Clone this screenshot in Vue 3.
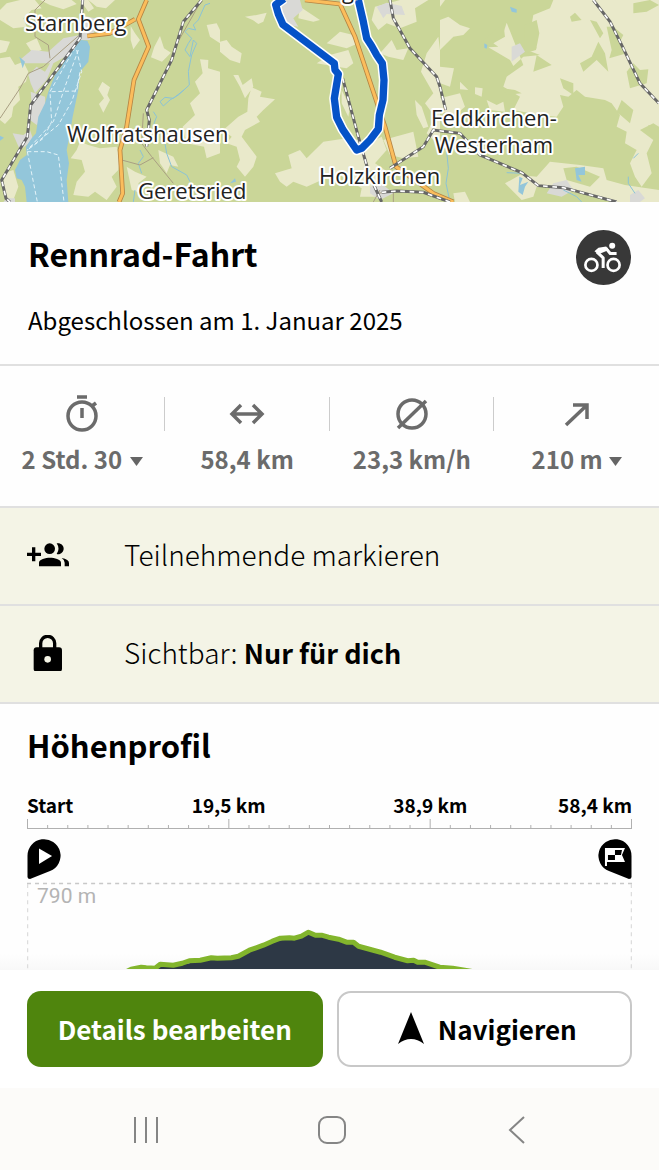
<script setup>
const stats = [
  { id: 'time', label: 'Dauer', value: '2 Std. 30', menu: true, wide: true },
  { id: 'distance', label: 'Distanz', value: '58,4 km' },
  { id: 'speed', label: 'Durchschnitt', value: '23,3 km/h' },
  { id: 'climb', label: 'Bergauf', value: '210 m', menu: true },
]
const axis = ['Start', '19,5 km', '38,9 km', '58,4 km']
const ticks = Array.from({ length: 31 }, (_, i) => ({
  x: 0.5 + i * 20.1,
  y: i % 10 === 0 ? 1 : 7,
}))
</script>

<template>
  <main class="screen">
    <svg class="map" viewBox="0 0 659 202" preserveAspectRatio="xMidYMid slice" role="img" aria-label="Karte der Tour">
      <rect class="forest" x="-700" width="2060" height="202" />
      <g transform="scale(.33333)">
        <g class="field">
          <path d="M0 30 20 10 60 0H105L125 25 95 30 70 55 80 80 40 85 0 60ZM120 0H215L230 12 190 28 150 15ZM240 0H265L282 25 265 35Z" />
          <path d="M0 175 30 170 45 195 70 185 85 215 78 245 55 260 60 300 40 320 35 350 15 372 0 360ZM78 130 110 115 125 150 98 160ZM0 120 30 125 18 155 0 160Z" />
          <path d="M392 78 405 100 420 120 400 148 392 120ZM480 108 492 145 513 158 486 185 453 172 463 140ZM307 245 330 262 322 285 330 300 310 338 297 312 312 295 295 268ZM620 75 650 70 660 90 660 130 630 110ZM600 178 625 180 624 205 660 215 660 460 620 475 612 440 560 430 548 380 585 345 570 310 600 280 585 245 608 220Z" />
          <path d="M240 425 265 435 300 445 350 440 360 480 355 510 335 530 350 560 320 600 285 575 265 590 220 585 230 545 255 515 245 480 212 475 230 450ZM380 500 405 515 440 530 415 550 425 580 395 570ZM10 520 40 510 55 560 40 600 12 590ZM265 0H345L318 25 290 20ZM475 450 520 470 535 500 510 495 500 520 480 490Z" />
        </g>
        <g class="field" transform="translate(660)">
          <path d="M75 50 110 45 140 38 130 65 115 72 98 60ZM0 125 20 120 35 140 65 160 60 190 30 180 0 155ZM40 225 55 225 68 255 95 235 100 260 75 295 60 260ZM95 262 125 275 120 290 165 298 130 330 110 350 120 365 75 390 65 410 110 470 100 500 75 530 50 500 60 480 50 440 20 430 35 410 10 390 55 350 82 335 85 295ZM165 520 215 505 205 465 240 450 260 475 310 425 380 415 455 425 485 410 500 450 465 490 495 510 460 560 480 590 420 590 425 565 350 520 260 560 220 545 200 560 180 545ZM320 130 360 95 400 105 415 130 380 145ZM290 190 330 165 385 150 400 190 380 205 350 200ZM465 20 540 0H625L585 25 590 65 540 85 500 70 475 90 455 60ZM480 160 515 120 530 150 565 145 550 180 505 170ZM603 215 620 160 655 110 660 150V440L620 400 645 350 615 310 640 280ZM585 300 605 320 625 380 610 385 590 345ZM490 420 580 395 595 470 550 475 510 465ZM240 20 300 60 280 65 235 55ZM365 270 390 320 385 350 365 310Z" />
        </g>
        <g class="field" transform="translate(1320)">
          <path d="M0 0H15L0 20ZM0 60 25 50 60 75 90 85 70 105 40 110 0 150ZM0 200 42 205 30 260 0 250ZM0 330V295L60 280 75 320 40 350ZM200 68 190 100 160 130 175 140 145 142 210 180 220 198 250 170 300 165 260 150 290 145 270 100 280 45 330 25 340 0H657V380L640 370 600 390 640 420 620 460 635 520 605 560 585 530 570 490 590 450 555 430 560 395 530 380 540 345 515 310 495 300 435 290 410 270 385 290 360 285 370 320 350 350 300 345 220 330 240 290 190 260 200 230 250 195ZM195 550 240 525 290 530 330 485 420 495 490 505 500 540 555 555 657 570V606H520L440 580 340 560 290 560 280 590 245 600Z" />
          <path d="M140 300 170 315 190 305 195 335 150 330ZM60 245 85 270 60 268ZM105 262 128 265 125 290 105 282ZM40 580 75 575 90 606H45Z" />
        </g>
        <g class="forest">
          <path d="M1440 130 1510 70 1515 110 1480 130ZM1575 75 1610 60 1618 100 1608 150 1575 160ZM1610 165 1655 195 1600 215ZM1740 190 1775 170 1795 125 1815 160 1825 215 1790 180 1750 215ZM1770 60 1790 65 1810 100 1800 115ZM1710 50 1725 38 1745 60 1715 65ZM1900 10 1950 0 1977 15 1940 35 1900 40ZM1820 80 1840 80 1870 105 1860 125 1880 160 1828 175 1835 150ZM1880 215 1900 190 1920 210 1945 208 1940 250 1890 265ZM1865 300 1900 330 1890 370 1850 335ZM1505 265 1545 270 1565 280 1520 285ZM1680 235 1720 250 1720 285 1690 265ZM1945 375 1977 385 1950 400ZM1690 505 1730 500 1800 530 1770 560 1700 540Z" />
        </g>
        <g class="town">
          <path d="M240 45 285 55 320 78 285 90 270 120 235 120 205 165 160 190 140 240 105 280 92 250 85 225 110 200 135 215 150 190 75 190 62 178 95 150 145 155 190 115 240 105ZM92 275 135 290 138 335 110 375 90 360 95 310ZM38 400 70 405 90 390 100 420 60 450ZM20 595H45V606H10Z" />
          <path d="M815 10 835 0H900L908 30 880 55 895 80 840 70ZM1130 20 1160 8 1205 18 1215 45 1160 42 1150 55ZM1535 140 1560 130 1575 155 1535 185 1535 195ZM1110 560 1150 555 1180 580 1140 600 1110 580ZM1660 550 1700 540 1720 570 1685 590 1640 580ZM1890 585 1915 570 1935 595 1920 606H1890Z" />
        </g>
        <g class="water">
          <path d="M243 120 262 122 270 140 265 185 240 215 235 270 218 350 210 400 200 450 207 490 200 540 205 606H80L75 560 65 540 50 535 45 510 60 480 80 465 78 440 95 415 108 400 115 350 135 310 145 275 165 225 185 200 210 150Z" />
          <path d="M58 170 75 185 68 205ZM0 407 12 413 0 422ZM1530 20 1550 28 1550 38 1535 35ZM1453 130 1462 135 1460 146 1453 143ZM1558 530 1568 535 1560 555 1585 545 1575 560 1568 585 1555 575ZM1725 505 1755 500 1755 525 1735 525 1745 545 1730 540ZM690 550 705 535 708 545Z" />
        </g>
        <g class="river">
          <path d="M630 10 615 15 595 60 580 75 587 90 565 85 555 95 575 115 565 130 555 150 570 170 580 120 590 130 575 165 565 215 568 255 535 285 510 300 490 318 480 305 495 292 520 295 552 270M460 335 470 350 462 370 490 400 500 460 515 500 560 525 570 545M420 450 430 470 415 490 425 520M405 570 400 606M1340 455 1345 505 1338 550 1350 606M1520 518 1570 520M1690 570 1730 590 1745 606M1915 460 1900 475M1885 530 1885 550 1905 580" />
        </g>
        <path class="ferry" d="M235 125 150 275 155 365 130 415 82 450M235 150 195 260 160 365 82 450M230 150 245 215 215 305 175 375 82 450M155 275 230 273 240 215M82 455 140 455 175 465 192 606M82 455 112 606" />
        <g class="minor">
          <path d="M135 0 105 30V110L145 135 150 175M235 108 130 200 85 220 60 265 0 355M605 0 520 150M430 340 425 430 455 470 520 550M365 480 420 495 460 473M1130 580 1180 575 1180 606M1120 606 1140 570" />
        </g>
        <path class="road edge" d="M440 0 415 58 446 140 402 240 380 380 360 450 368 580 357 606M405 58 330 100 262 108M915 0 1020 12 1065 110 1125 290 1155 380 1188 500 1300 580 1360 606" />
        <path class="road" d="M440 0 415 58 446 140 402 240 380 380 360 450 368 580 357 606M405 58 330 100 262 108M915 0 1020 12 1065 110 1125 290 1155 380 1188 500 1300 580 1360 606" />
        <path class="rail" d="M248 0 240 115 92 315 82 410 5 540 18 595 30 606M605 0 550 65 515 180 440 330 448 360 440 440M1028 235 1075 410 1110 530 1145 606M1170 0 1180 55 1230 145 1310 230 1320 260 1337 330M1170 505 1270 440 1300 390 1380 400 1440 465 1565 518 1615 557 1690 563 1850 606M1145 577 1190 573 1270 577 1350 606M1780 0 1830 65 1870 145 1920 250 1977 310" />
        <path class="rail gap" d="M248 0 240 115 92 315 82 410 5 540 18 595 30 606M605 0 550 65 515 180 440 330 448 360 440 440M1028 235 1075 410 1110 530 1145 606M1170 0 1180 55 1230 145 1310 230 1320 260 1337 330M1170 505 1270 440 1300 390 1380 400 1440 465 1565 518 1615 557 1690 563 1850 606M1145 577 1190 573 1270 577 1350 606M1780 0 1830 65 1870 145 1920 250 1977 310" />
        <path class="route edge" d="M852 -4 827 14 835 42 849 74 1003 190 1005 210 1015 222 1003 295 1010 352 1028 388 1070 450 1085 445 1110 420 1135 387 1138 345 1149 300 1152 240 1147 190 1130 165 1115 138 1100 115 1090 65 1075 0" />
        <path class="route" d="M852 -4 827 14 835 42 849 74 1003 190 1005 210 1015 222 1003 295 1010 352 1028 388 1070 450 1085 445 1110 420 1135 387 1138 345 1149 300 1152 240 1147 190 1130 165 1115 138 1100 115 1090 65 1075 0" />
      </g>
      <g class="place">
        <text x="25" y="31">Starnberg</text>
        <text x="67" y="142">Wolfratshausen</text>
        <text x="138" y="199">Geretsried</text>
        <text x="319" y="184">Holzkirchen</text>
        <text x="494" y="126" text-anchor="middle">Feldkirchen-</text>
        <text x="494" y="153" text-anchor="middle">Westerham</text>
        <text x="342" y="-1">g</text>
      </g>
    </svg>

    <header class="head">
      <div>
        <h1>Rennrad-Fahrt</h1>
        <p>Abgeschlossen am 1. Januar 2025</p>
      </div>
      <svg class="sport" viewBox="50 45 164 164" role="img" aria-label="Rennrad">
        <circle cx="132" cy="127" r="82" fill="#383838" />
        <g fill="none" stroke="#fff" stroke-width="8">
          <circle cx="96" cy="149" r="18" />
          <circle cx="162" cy="149" r="18" />
        </g>
        <circle cx="158" cy="92" r="9" fill="#fff" />
        <path d="M112 110 131 128V158" fill="none" stroke="#fff" stroke-width="9" stroke-linejoin="round" />
        <path d="M139 99 152 115H171" fill="none" stroke="#fff" stroke-width="9" stroke-linejoin="round" />
        <path d="M105 108 117 98 140 94 148 105 128 113 118 117Z" fill="#fff" />
      </svg>
    </header>

    <section class="stats" aria-label="Statistik">
      <component :is="s.menu ? 'button' : 'div'" v-for="s in stats" :key="s.id" class="stat" :aria-label="s.menu ? s.label + ' ' + s.value : null">
        <svg class="stat-icon" viewBox="0 0 40 40" aria-hidden="true">
          <g v-if="s.id === 'time'">
            <circle cx="20" cy="22" r="14" />
            <path d="M15 3H25M20 14V24M30 12 34 9" />
          </g>
          <path v-else-if="s.id === 'distance'" d="M5 20H35M14 11 5 20 14 29M26 11 35 20 26 29" />
          <g v-else-if="s.id === 'speed'">
            <circle cx="20" cy="20" r="14" />
            <path d="M6 34 34 7" />
          </g>
          <path v-else d="M9 31 29 12M16 11H30V25" />
        </svg>
        <span class="value">{{ s.value }}
          <svg v-if="s.menu" class="caret" :class="{ spaced: s.wide }" viewBox="0 0 13 9" aria-hidden="true"><path d="M0 0H13L6.500 9Z" /></svg>
        </span>
      </component>
    </section>

    <button class="row">
      <svg class="row-icon" viewBox="82 98 126 72" aria-hidden="true">
        <path d="M97 111H107V127H124V137H107V153H97V137H82V127H97ZM118 168V157C118 147 138 142 151 142S184 147 184 157V168ZM186 143Q208 147 208 158V168H195V157Q195 149 186 143ZM171 99C183 97 192 105 192 115S182 134 171 131Q182 115 171 99Z" />
        <circle cx="150" cy="115" r="16" />
      </svg>
      <span>Teilnehmende markieren</span>
    </button>
    <button class="row">
      <svg class="row-icon" viewBox="82 380 126 110" aria-hidden="true">
        <path d="M123 419V405A21 21 0 0 1 165 405V419" fill="none" stroke="#000" stroke-width="10" />
        <rect x="102" y="417" width="85" height="73" rx="9" />
        <circle cx="144" cy="453" r="10" fill="#f4f4e6" />
      </svg>
      <span>Sichtbar: <b>Nur für dich</b></span>
    </button>

    <section class="profile">
      <h2>Höhenprofil</h2>
      <div class="axis">
        <span v-for="a in axis" :key="a">{{ a }}</span>
      </div>
      <svg class="chart" viewBox="0 0 604 151" role="img" aria-label="Höhenprofil der Tour">
        <path class="scale" d="M0 10.500H604" />
        <path v-for="t in ticks" :key="t.x" class="scale" :d="`M${t.x} ${t.y}V10`" />
        <path d="M0.500 38A16.500 16.500 0 1 1 23 53L3 61Q0.500 61 0.500 59Z" />
        <path d="M12 30.500V46L25 38Z" fill="#fff" />
        <path d="M603.500 38A16.500 16.500 0 1 0 581 53L601 61Q603.500 61 603.500 59Z" />
        <path d="M577 30H597L594 37 597 44H579V48H577ZM587 32V37H593L594 32ZM580 37V42H587V37Z" fill="#fff" fill-rule="evenodd" />
        <path class="dash" d="M0 65.500H604" />
        <path class="dash faint" d="M0.500 66V152M603.500 66V152" />
        <text x="10" y="85">790 m</text>
        <path class="hill" d="M97 155 104 151 114 149 128 150 133 146 146 147 162 145 173 142 190 139.500 204 140.500 216 137 230 130 245 124 262 120 273 119 281 114 296 117 306 119 321 124 326 124 331 128 353 135 380 142.500 386 142 401 145 418 149 433 151 452 155Z" />
        <path class="ridge" d="M96 155 104 151 114 149 119 149.500 128 150 133 146 146 147 155 145 162 142.500 173 142 184 139.500 190 140 204 139.500 211 138 222 132 236 127 245 123 253 120 262 119.500 267 120 274 118 281 114 288 117 294 117 301 119 311 121 319 124 326 124 331 128 353 134 367 139 380 142.500 386 142 390 144 397 144 412 149 425 150 437 152 449 154" />
      </svg>
    </section>

    <footer class="actions">
      <button class="primary">Details bearbeiten</button>
      <button class="secondary">
        <svg viewBox="0 0 26 33" aria-hidden="true"><path d="M13 0 26 32Q13 22 0 32Z" /></svg>
        Navigieren
      </button>
    </footer>

    <nav class="system" aria-label="System">
      <button aria-label="Letzte Apps"><svg viewBox="0 0 28 28"><path d="M2 1V27M13 1V27M24 1V27" /></svg></button>
      <button aria-label="Startseite"><svg viewBox="0 0 28 28"><rect x="1" y="1" width="26" height="26" rx="8" /></svg></button>
      <button aria-label="Zurück"><svg viewBox="0 0 28 28"><path d="M21 1 7 14 21 27" /></svg></button>
    </nav>
  </main>
</template>

<style>
body { margin: 0; background: #fefefe; }
</style>

<style scoped>
.screen { display: flex; flex-direction: column; min-height: 100vh; font-family: "Noto Sans CJK SC", "Noto Sans", sans-serif; color: #000; }
button { margin: 0; padding: 0; border: 0; background: none; font: inherit; color: inherit; cursor: pointer; }
svg { display: block; flex: none; }

.map { width: 100%; height: 202px; }
.forest { fill: #cad698; }
.field { fill: #e9e9ca; }
.town { fill: #d9d9d6; }
.water { fill: #93c6da; }
.river { fill: none; stroke: #8bc3d6; stroke-width: 3; }
.ferry { fill: none; stroke: #e4f3f8; stroke-width: 3; stroke-dasharray: 12 8; }
.minor { fill: none; stroke: #a99f83; stroke-width: 3; }
.road { fill: none; stroke: #fbbd5c; stroke-width: 9; stroke-linejoin: round; }
.road.edge { stroke: #b58443; stroke-width: 14; }
.rail { fill: none; stroke: #666; stroke-width: 9; }
.rail.gap { stroke: #fff; stroke-width: 5; stroke-dasharray: 14 14; }
.route { fill: none; stroke: #0553c8; stroke-width: 22; stroke-linejoin: round; }
.route.edge { stroke: #fff; stroke-width: 31; }
.place { font-family: "Open Sans", "Noto Sans", sans-serif; font-size: 22px; fill: #222; stroke: #fff; stroke-width: 4px; stroke-linejoin: round; paint-order: stroke; }

.head { display: flex; justify-content: space-between; padding: 28px 28px 24px; border-bottom: 2px solid #e0e0e0; }
h1, h2 { margin: 0; font-size: 32px; line-height: 46px; font-weight: 700; }
h2 { font-size: 31px; line-height: 42px; }
.head p { margin: 24px 0 0; font-size: 24px; line-height: 40px; }
.sport { width: 55px; height: 55px; }

.stats { display: grid; grid-template-columns: repeat(4, 1fr); padding: 28px 0; border-bottom: 2px solid #e0e0e0; color: #6b6b6b; }
.stat { position: relative; display: flex; flex-direction: column; align-items: center; gap: 7px; padding-bottom: 1px; }
.stat + .stat::before { content: ""; position: absolute; left: -1px; top: 3px; width: 1px; height: 34px; background: #ccc; }
.stat-icon { width: 40px; height: 40px; fill: none; stroke: #6b6b6b; stroke-width: 3.500; }
.value { display: flex; align-items: center; font-size: 24px; line-height: 36px; font-weight: 700; white-space: nowrap; }
.caret { width: 13px; height: 9px; margin: 5px 0 0 6px; fill: #656565; }
.caret.spaced { margin-left: 8px; }

.row { display: flex; align-items: center; gap: 55px; padding: 24px 27px 28px; background: #f4f4e6; border-bottom: 2px solid #e0e0e0; text-align: left; font-size: 28px; line-height: 44px; font-weight: 300; }
.row-icon { width: 42px; padding-top: 2px; }
.row b { font-size: 27px; line-height: 1; font-weight: 700; }

.profile { display: flex; flex-direction: column; flex: 1; padding: 20px 27px 0; background: linear-gradient(to top, #f8f8f8, #fefefe 16px); }
.axis { display: grid; grid-template-columns: 1fr 2fr 2fr 1fr; margin-top: 26px; font-size: 19px; line-height: 26px; font-weight: 700; white-space: nowrap; text-align: center; }
.axis span:first-child { text-align: left; }
.axis span:last-child { justify-self: end; }
.chart { width: 100%; }
.chart text { font-family: Roboto, sans-serif; font-size: 21px; fill: #b4b4b4; }
.scale { fill: none; stroke: #b0b0b0; stroke-width: 1; }
.dash { fill: none; stroke: #c8c8c8; stroke-width: 1.500; stroke-dasharray: 4 4; }
.dash.faint { stroke: #ddd; }
.hill { fill: #2d3845; }
.ridge { fill: none; stroke: #82b52c; stroke-width: 5; stroke-linejoin: round; }

.actions { display: grid; grid-template-columns: 1fr 1fr; gap: 14px; padding: 21px 27px; background: #fff; }
.actions button { display: flex; align-items: center; justify-content: center; gap: 14px; height: 76px; box-sizing: border-box; padding-bottom: 2px; border-radius: 14px; font-size: 26px; font-weight: 700; }
.actions .primary { background: #4f850d; color: #fff; }
.actions .secondary { padding-left: 6px; border: 2px solid #c8c8c8; }
.secondary svg { width: 26px; height: 33px; }

.system { display: flex; justify-content: space-around; padding: 28px 50px 26px 55px; background: #fcfbf9; }
.system svg { width: 28px; height: 28px; fill: none; stroke: #858585; stroke-width: 2; }
</style>
